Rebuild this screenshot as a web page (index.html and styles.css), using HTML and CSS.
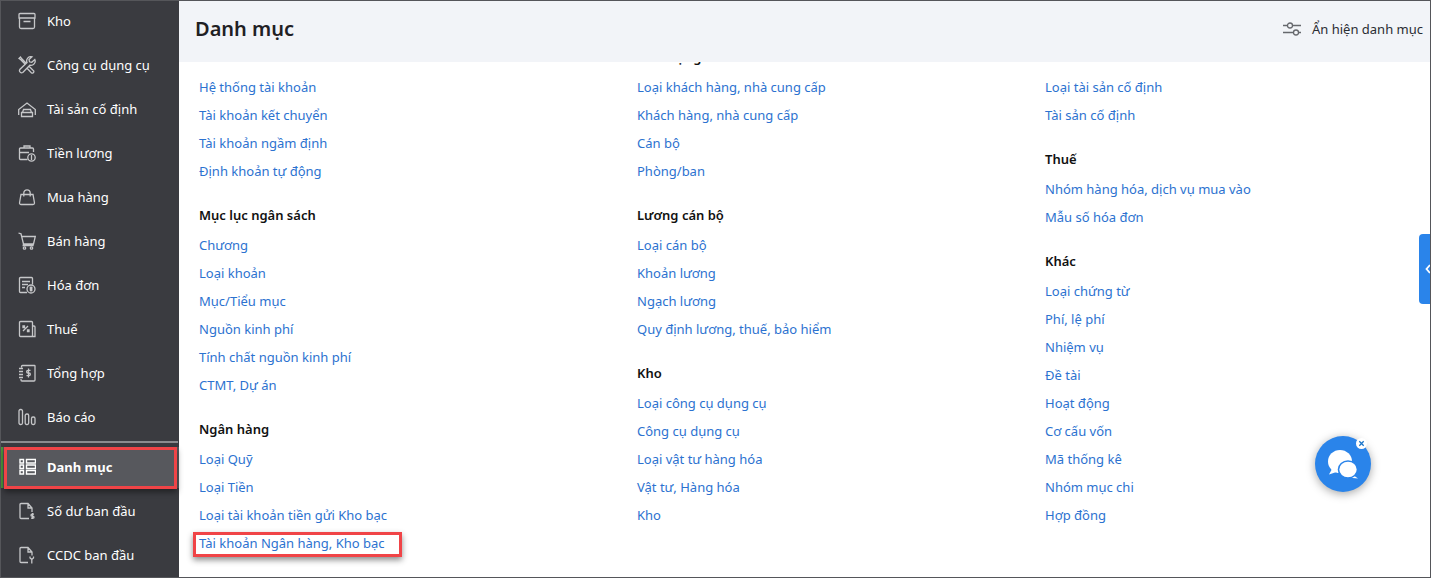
FILE: index.html
```html
<!DOCTYPE html>
<html lang="vi">
<head>
<meta charset="utf-8">
<title>Danh mục</title>
<link rel="stylesheet" href="styles.css">
</head>
<body>
<div class="app">
  <aside class="sidebar">
    <a class="nav-item"><svg class="ico" viewBox="0 0 18 18"><path d="M1 6V2.500a1 1 0 0 1 1-1h14a1 1 0 0 1 1 1V6zM1.500 6v9a1.500 1.500 0 0 0 1.500 1.500h12a1.500 1.500 0 0 0 1.500-1.500V6M5.500 9.500h7"/></svg><span>Kho</span></a>
    <a class="nav-item"><svg class="ico" viewBox="0 0 18 18"><path d="M16.800 3.500L13.800 6.200 11.500 5.800 11 3.500 14 .8A4.200 4.200 0 0 0 9 6.500L1.800 13.500A2.200 2.200 0 0 0 4.800 16.500L11.800 9.200A4.200 4.200 0 0 0 16.800 3.500zM7.200 8.200L2.800 3.800 1 2.500 2.500 1 3.800 2.800 8.200 7.200M10.800 10L15.800 15A1.700 1.700 0 0 1 13.500 17L8.800 12"/></svg><span>Công cụ dụng cụ</span></a>
    <a class="nav-item"><svg class="ico" viewBox="0 0 18 18"><path d="M.7 15V9.500L9 3l8.300 6.500V15M4.500 12.500l1-3h7l1 3M3.500 12.500h11v4h-11z"/></svg><span>Tài sản cố định</span></a>
    <a class="nav-item"><svg class="ico" viewBox="0 0 18 18"><path d="M9.500 15.500H2.500a1 1 0 0 1-1-1V5a1 1 0 0 1 1-1h12a1 1 0 0 1 1 1v3M1.500 8.500h9.500M6 4V2h6v2"/><circle cx="13.500" cy="13.500" r="3.700"/><path d="M13.500 11v5"/></svg><span>Tiền lương</span></a>
    <a class="nav-item"><svg class="ico" viewBox="0 0 18 18"><path d="M3 6.500h12l1.500 8.500a1.500 1.500 0 0 1-1.500 1.500H3A1.500 1.500 0 0 1 1.500 15zM5.800 8.500V5a3.200 3.200 0 0 1 6.400 0v3.500"/></svg><span>Mua hàng</span></a>
    <a class="nav-item"><svg class="ico" viewBox="0 0 18 18"><path d="M.5 1l2.500.8L5.500 12h10l1.800-7.500H3.800M5.500 12l-.3 1.500h10.500"/><circle cx="6.500" cy="16" r="1.200"/><circle cx="13.500" cy="16" r="1.200"/></svg><span>Bán hàng</span></a>
    <a class="nav-item"><svg class="ico" viewBox="0 0 18 18"><path d="M9 16.500H2.500a1 1 0 0 1-1-1V2.500a1 1 0 0 1 1-1h11a1 1 0 0 1 1 1v6M4 5.500h8M4 8.500h6M4 11.500h3"/><circle cx="13" cy="13" r="4"/><path d="M13 10.500v5M14.500 11.500h-2.200v1.500h1.500v1.500h-2"/></svg><span>Hóa đơn</span></a>
    <a class="nav-item"><svg class="ico" viewBox="0 0 18 18"><path d="M2.500 1.500h11a1 1 0 0 1 1 1v13a1 1 0 0 1-1 1h-11a1 1 0 0 1-1-1v-13a1 1 0 0 1 1-1zM14.500 6h1.500a1 1 0 0 1 1 1v9.500h-4M5 11l5-5M5 6h1.500v1.500H5zM9.500 10H11v1.500H9.500z"/></svg><span>Thuế</span></a>
    <a class="nav-item"><svg class="ico" viewBox="0 0 18 18"><path d="M3.500 3.500v-1a1 1 0 0 1 1-1h12a.5.500 0 0 1 .5.500v14a1 1 0 0 1-1 1h-12a1 1 0 0 1-1-1v-1M1 4.500h4M1 7.500h4M1 10.500h4M1 13.500h4M12.500 6.300h-2.500a1.300 1.300 0 0 0 0 2.700h1a1.300 1.300 0 0 1 0 2.700H8.500M10.500 4.500v9"/></svg><span>Tổng hợp</span></a>
    <a class="nav-item"><svg class="ico" viewBox="0 0 18 18"><rect x="1" y="1.500" width="3.500" height="15" rx="1.500"/><rect x="7.200" y="6" width="3.500" height="10.500" rx="1.500"/><rect x="13.500" y="9" width="3.500" height="7.500" rx="1.500"/></svg><span>Báo cáo</span></a>
    <div class="nav-divider"></div>
    <a class="nav-item active"><svg class="ico" viewBox="0 0 18 18"><path d="M2 1.500h3.500V5H2zM2 7h3.500v3.500H2zM2 12.500h3.500V16H2zM8.500 1.500H17.500V5H8.500zM8.500 7H17.500v3.500H8.500zM8.500 12.500H17.500V16H8.500z"/></svg><span>Danh mục</span></a>
    <a class="nav-item"><svg class="ico" viewBox="0 0 18 18"><path d="M11 16.500H3a1 1 0 0 1-1-1v-13a1 1 0 0 1 1-1h7l4 4.500v4M10 1.500V6h4M14.500 11v6M16 12.200h-2a1 1 0 0 0 0 2h1a1 1 0 0 1 0 2h-2"/></svg><span>Số dư ban đầu</span></a>
    <a class="nav-item"><svg class="ico" viewBox="0 0 18 18"><path d="M10 16.500H3a1 1 0 0 1-1-1v-13a1 1 0 0 1 1-1h7l4 4.500v3.500M10 1.500V6h4M12 10.500v1.500l1.800 1.500L15.500 12v-1.500M13.800 13.500v4"/></svg><span>CCDC ban đầu</span></a>
  </aside>
  <main class="main">
    <header class="topbar">
      <h1 class="title">Danh mục</h1>
      <div class="toggle">
        <svg class="toggle-ico" viewBox="0 0 18 14"><path d="M0 3.500h4.500M9.500 3.500H18M0 10.500h10.500M15.500 10.500H18"/><circle cx="7" cy="3.500" r="2.500"/><circle cx="13" cy="10.500" r="2.500"/></svg>
        <span>Ẩn hiện danh mục</span>
      </div>
    </header>
    <div class="scroller">
      <div class="columns">
        <div class="col">
          <section class="sec">
            <h2>Tài khoản</h2>
            <a>Hệ thống tài khoản</a><a>Tài khoản kết chuyển</a><a>Tài khoản ngầm định</a><a>Định khoản tự động</a>
          </section>
          <section class="sec">
            <h2>Mục lục ngân sách</h2>
            <a>Chương</a><a>Loại khoản</a><a>Mục/Tiểu mục</a><a>Nguồn kinh phí</a><a>Tính chất nguồn kinh phí</a><a>CTMT, Dự án</a>
          </section>
          <section class="sec">
            <h2>Ngân hàng</h2>
            <a>Loại Quỹ</a><a>Loại Tiền</a><a>Loại tài khoản tiền gửi Kho bạc</a><a>Tài khoản Ngân hàng, Kho bạc</a>
          </section>
        </div>
        <div class="col">
          <section class="sec">
            <h2>Đối tượng</h2>
            <a>Loại khách hàng, nhà cung cấp</a><a>Khách hàng, nhà cung cấp</a><a>Cán bộ</a><a>Phòng/ban</a>
          </section>
          <section class="sec">
            <h2>Lương cán bộ</h2>
            <a>Loại cán bộ</a><a>Khoản lương</a><a>Ngạch lương</a><a>Quy định lương, thuế, bảo hiểm</a>
          </section>
          <section class="sec">
            <h2>Kho</h2>
            <a>Loại công cụ dụng cụ</a><a>Công cụ dụng cụ</a><a>Loại vật tư hàng hóa</a><a>Vật tư, Hàng hóa</a><a>Kho</a>
          </section>
        </div>
        <div class="col">
          <section class="sec">
            <h2>Tài sản</h2>
            <a>Loại tài sản cố định</a><a>Tài sản cố định</a>
          </section>
          <section class="sec">
            <h2>Thuế</h2>
            <a>Nhóm hàng hóa, dịch vụ mua vào</a><a>Mẫu số hóa đơn</a>
          </section>
          <section class="sec">
            <h2>Khác</h2>
            <a>Loại chứng từ</a><a>Phí, lệ phí</a><a>Nhiệm vụ</a><a>Đề tài</a><a>Hoạt động</a><a>Cơ cấu vốn</a><a>Mã thống kê</a><a>Nhóm mục chi</a><a>Hợp đồng</a>
          </section>
        </div>
      </div>
    </div>
  </main>
  <div class="side-tab"><svg viewBox="0 0 6 10"><path d="M5 1L1.500 5 5 9"/></svg></div>
  <div class="chat">
    <svg class="chat-ico" viewBox="0 0 30 29"><path class="bubble" d="M4.500 18L1 24.500l7.500-2.500z"/><ellipse class="bubble" cx="12" cy="11.500" rx="12" ry="11.500"/><path class="bubble" d="M25 25l5 3.500-8-.8z"/><ellipse class="bubble front" cx="20" cy="19.500" rx="9.500" ry="8.500"/></svg>
    <span class="chat-close"><svg viewBox="0 0 8 8"><path d="M1.500 1.500l5 5M6.500 1.500l-5 5"/></svg></span>
  </div>
  <div class="mark mark-nav"></div>
  <div class="mark mark-link"></div>
</div>
</body>
</html>
```
FILE: styles.css
```css
* { box-sizing: border-box; }
html, body { margin: 0; height: 100%; overflow: hidden; }
body { font-family: "Noto Sans", sans-serif; font-size: 13px; background: #fff; }
.app { position: relative; display: flex; width: 1431px; height: 578px; border: 1px solid #55565a; border-width: 1px 1px 1px 0; overflow: hidden; }
.sidebar { width: 179px; flex: none; background: #3a3b40; border-left: 1px solid #55565a; display: flex; flex-direction: column; margin-top: -2px; }
.nav-item { display: flex; align-items: center; gap: 11px; height: 44px; flex: none; padding-left: 17px; color: #fff; }
.ico { width: 18px; height: 18px; flex: none; fill: none; stroke: #c6c7c9; stroke-width: 1.3; }
.nav-divider { height: 2px; background: #8a8b8e; flex: none; margin: 2px 1px 4px 0; }
.nav-item.active { height: 41px; background: #57585d; font-weight: 700; border-left: 2px solid #4a9a3a; padding: 0 0 1px 15px; }
.nav-item.active .ico { stroke: #fff; stroke-width: 1.4; }
.nav-item.active + .nav-item { margin-top: 1px; }
.main { flex: 1; min-width: 0; display: flex; flex-direction: column; }
.topbar { height: 61px; flex: none; background: #f2f4f8; display: flex; align-items: center; justify-content: space-between; padding: 0 7px 6px 16px; position: relative; z-index: 1; }
.title { margin: 0; font-size: 20px; font-weight: 600; color: #1f2024; }
.toggle { display: flex; align-items: center; gap: 11px; color: #2b2d33; font-size: 13px; }
.toggle-ico { width: 18px; height: 14px; fill: none; stroke: #66686d; stroke-width: 1.3; }
.scroller { flex: 1; min-height: 0; overflow: hidden; }
.columns { display: grid; grid-template-columns: 438px 408px 1fr; padding-left: 20px; margin-top: -19px; }
.sec { display: flex; flex-direction: column; margin-bottom: 16px; }
.sec h2 { margin: 0 0 2px; height: 28px; line-height: 28px; font-size: 13px; font-weight: 600; color: #111; }
.sec a { height: 28px; line-height: 28px; color: #2c72d0; }
.side-tab { position: absolute; right: 0; top: 233px; width: 11px; height: 70px; background: #2a84ea; border-radius: 4px 0 0 4px; display: flex; align-items: center; justify-content: flex-end; }
.side-tab svg { width: 6px; height: 10px; fill: none; stroke: #fff; stroke-width: 1.800; margin-right: -1px; }
.chat { position: absolute; left: 1315px; top: 435px; width: 56px; height: 56px; border-radius: 50%; background: #2a84ea; box-shadow: 0 2px 10px rgba(0,0,0,.35); display: flex; align-items: center; justify-content: center; }
.chat-ico { width: 30px; height: 29px; }
.bubble { fill: #fff; }
.front { stroke: #2a84ea; stroke-width: 1.600; }
.chat-close { position: absolute; right: 4px; top: 2px; width: 11px; height: 11px; border-radius: 50%; background: #fff; display: flex; align-items: center; justify-content: center; }
.chat-close svg { width: 7px; height: 7px; fill: none; stroke: #1b75c9; stroke-width: 1.500; }
.mark { position: absolute; border: 3px solid #f04447; box-shadow: 0 3px 6px rgba(0,0,0,.45); pointer-events: none; }
.mark-nav { left: 4px; top: 446px; width: 173px; height: 42px; }
.mark-link { left: 193px; top: 531px; width: 209px; height: 25px; }
```
